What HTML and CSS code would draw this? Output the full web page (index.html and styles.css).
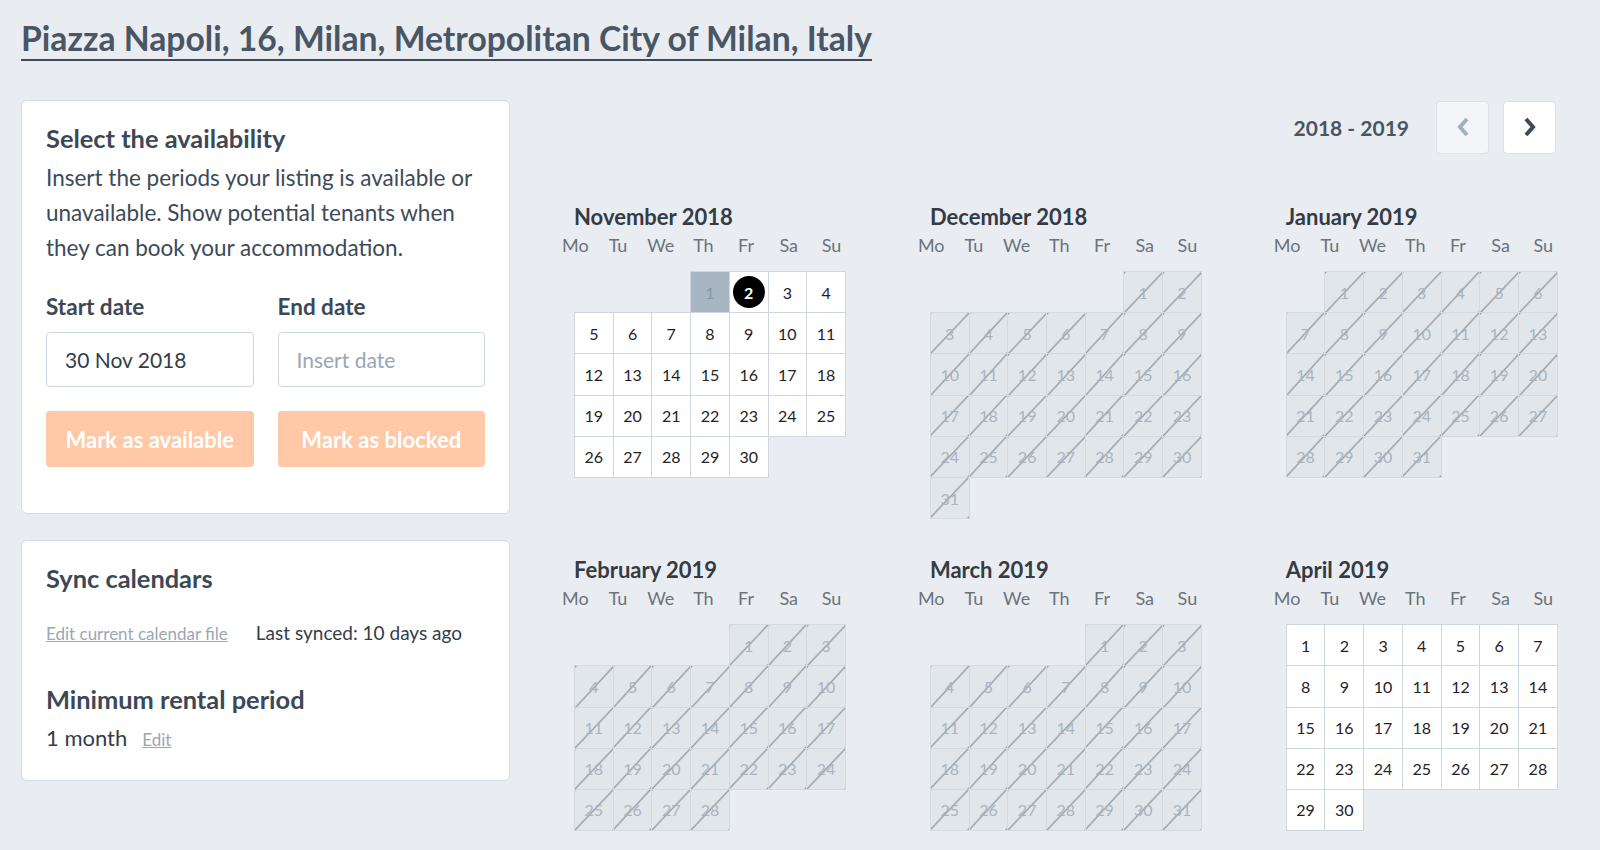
FILE: index.html
```html
<!DOCTYPE html>
<html lang="en">
<head>
<meta charset="utf-8">
<title>Availability</title>
<link rel="stylesheet" href="styles.css">
</head>
<body>
<div class="page">
  <h1 class="address">Piazza Napoli, 16, Milan, Metropolitan City of Milan, Italy</h1>
  <div class="layout">
    <aside class="sidebar">
      <section class="card availability">
        <h2>Select the availability</h2>
        <p class="intro">Insert the periods your listing is available or unavailable. Show potential tenants when they can book your accommodation.</p>
        <div class="date-grid">
          <div class="field">
            <label class="label">Start date</label>
            <div class="input">30 Nov 2018</div>
          </div>
          <div class="field">
            <label class="label">End date</label>
            <div class="input placeholder">Insert date</div>
          </div>
          <button class="btn">Mark as available</button>
          <button class="btn">Mark as blocked</button>
        </div>
      </section>
      <section class="card sync">
        <h2>Sync calendars</h2>
        <div class="sync-row">
          <a class="link">Edit current calendar file</a>
          <span class="synced">Last synced: 10 days ago</span>
        </div>
        <h2 class="min-title">Minimum rental period</h2>
        <div class="min-row">
          <span class="min-value">1 month</span>
          <a class="link small">Edit</a>
        </div>
      </section>
    </aside>

    <main class="calendar-area">
      <div class="cal-nav">
        <span class="years">2018 - 2019</span>
        <button class="nav-btn prev" aria-label="Previous">
          <svg width="14" height="22" viewBox="0 0 14 22"><polyline points="11,3 4,11 11,19" fill="none" stroke="currentColor" stroke-width="4"/></svg>
        </button>
        <button class="nav-btn next" aria-label="Next">
          <svg width="14" height="22" viewBox="0 0 14 22"><polyline points="3,3 10,11 3,19" fill="none" stroke="currentColor" stroke-width="4"/></svg>
        </button>
      </div>

      <div class="months">
        <!-- November 2018 -->
        <div class="month">
          <div class="month-title">November 2018</div>
          <div class="weekdays"><span>Mo</span><span>Tu</span><span>We</span><span>Th</span><span>Fr</span><span>Sa</span><span>Su</span></div>
          <table class="cal">
            <tr><td></td><td></td><td></td><td class="d sel">1</td><td class="d today"><span>2</span></td><td class="d">3</td><td class="d">4</td></tr>
            <tr><td class="d">5</td><td class="d">6</td><td class="d">7</td><td class="d">8</td><td class="d">9</td><td class="d">10</td><td class="d">11</td></tr>
            <tr><td class="d">12</td><td class="d">13</td><td class="d">14</td><td class="d">15</td><td class="d">16</td><td class="d">17</td><td class="d">18</td></tr>
            <tr><td class="d">19</td><td class="d">20</td><td class="d">21</td><td class="d">22</td><td class="d">23</td><td class="d">24</td><td class="d">25</td></tr>
            <tr><td class="d">26</td><td class="d">27</td><td class="d">28</td><td class="d">29</td><td class="d">30</td><td></td><td></td></tr>
          </table>
        </div>

        <!-- December 2018 -->
        <div class="month">
          <div class="month-title">December 2018</div>
          <div class="weekdays"><span>Mo</span><span>Tu</span><span>We</span><span>Th</span><span>Fr</span><span>Sa</span><span>Su</span></div>
          <table class="cal">
            <tr><td></td><td></td><td></td><td></td><td></td><td class="x">1</td><td class="x">2</td></tr>
            <tr><td class="x">3</td><td class="x">4</td><td class="x">5</td><td class="x">6</td><td class="x">7</td><td class="x">8</td><td class="x">9</td></tr>
            <tr><td class="x">10</td><td class="x">11</td><td class="x">12</td><td class="x">13</td><td class="x">14</td><td class="x">15</td><td class="x">16</td></tr>
            <tr><td class="x">17</td><td class="x">18</td><td class="x">19</td><td class="x">20</td><td class="x">21</td><td class="x">22</td><td class="x">23</td></tr>
            <tr><td class="x">24</td><td class="x">25</td><td class="x">26</td><td class="x">27</td><td class="x">28</td><td class="x">29</td><td class="x">30</td></tr>
            <tr><td class="x">31</td><td></td><td></td><td></td><td></td><td></td><td></td></tr>
          </table>
        </div>

        <!-- January 2019 -->
        <div class="month">
          <div class="month-title">January 2019</div>
          <div class="weekdays"><span>Mo</span><span>Tu</span><span>We</span><span>Th</span><span>Fr</span><span>Sa</span><span>Su</span></div>
          <table class="cal">
            <tr><td></td><td class="x">1</td><td class="x">2</td><td class="x">3</td><td class="x">4</td><td class="x">5</td><td class="x">6</td></tr>
            <tr><td class="x">7</td><td class="x">8</td><td class="x">9</td><td class="x">10</td><td class="x">11</td><td class="x">12</td><td class="x">13</td></tr>
            <tr><td class="x">14</td><td class="x">15</td><td class="x">16</td><td class="x">17</td><td class="x">18</td><td class="x">19</td><td class="x">20</td></tr>
            <tr><td class="x">21</td><td class="x">22</td><td class="x">23</td><td class="x">24</td><td class="x">25</td><td class="x">26</td><td class="x">27</td></tr>
            <tr><td class="x">28</td><td class="x">29</td><td class="x">30</td><td class="x">31</td><td></td><td></td><td></td></tr>
          </table>
        </div>

        <!-- February 2019 -->
        <div class="month">
          <div class="month-title">February 2019</div>
          <div class="weekdays"><span>Mo</span><span>Tu</span><span>We</span><span>Th</span><span>Fr</span><span>Sa</span><span>Su</span></div>
          <table class="cal">
            <tr><td></td><td></td><td></td><td></td><td class="x">1</td><td class="x">2</td><td class="x">3</td></tr>
            <tr><td class="x">4</td><td class="x">5</td><td class="x">6</td><td class="x">7</td><td class="x">8</td><td class="x">9</td><td class="x">10</td></tr>
            <tr><td class="x">11</td><td class="x">12</td><td class="x">13</td><td class="x">14</td><td class="x">15</td><td class="x">16</td><td class="x">17</td></tr>
            <tr><td class="x">18</td><td class="x">19</td><td class="x">20</td><td class="x">21</td><td class="x">22</td><td class="x">23</td><td class="x">24</td></tr>
            <tr><td class="x">25</td><td class="x">26</td><td class="x">27</td><td class="x">28</td><td></td><td></td><td></td></tr>
          </table>
        </div>

        <!-- March 2019 -->
        <div class="month">
          <div class="month-title">March 2019</div>
          <div class="weekdays"><span>Mo</span><span>Tu</span><span>We</span><span>Th</span><span>Fr</span><span>Sa</span><span>Su</span></div>
          <table class="cal">
            <tr><td></td><td></td><td></td><td></td><td class="x">1</td><td class="x">2</td><td class="x">3</td></tr>
            <tr><td class="x">4</td><td class="x">5</td><td class="x">6</td><td class="x">7</td><td class="x">8</td><td class="x">9</td><td class="x">10</td></tr>
            <tr><td class="x">11</td><td class="x">12</td><td class="x">13</td><td class="x">14</td><td class="x">15</td><td class="x">16</td><td class="x">17</td></tr>
            <tr><td class="x">18</td><td class="x">19</td><td class="x">20</td><td class="x">21</td><td class="x">22</td><td class="x">23</td><td class="x">24</td></tr>
            <tr><td class="x">25</td><td class="x">26</td><td class="x">27</td><td class="x">28</td><td class="x">29</td><td class="x">30</td><td class="x">31</td></tr>
          </table>
        </div>

        <!-- April 2019 -->
        <div class="month">
          <div class="month-title">April 2019</div>
          <div class="weekdays"><span>Mo</span><span>Tu</span><span>We</span><span>Th</span><span>Fr</span><span>Sa</span><span>Su</span></div>
          <table class="cal">
            <tr><td class="d">1</td><td class="d">2</td><td class="d">3</td><td class="d">4</td><td class="d">5</td><td class="d">6</td><td class="d">7</td></tr>
            <tr><td class="d">8</td><td class="d">9</td><td class="d">10</td><td class="d">11</td><td class="d">12</td><td class="d">13</td><td class="d">14</td></tr>
            <tr><td class="d">15</td><td class="d">16</td><td class="d">17</td><td class="d">18</td><td class="d">19</td><td class="d">20</td><td class="d">21</td></tr>
            <tr><td class="d">22</td><td class="d">23</td><td class="d">24</td><td class="d">25</td><td class="d">26</td><td class="d">27</td><td class="d">28</td></tr>
            <tr><td class="d">29</td><td class="d">30</td><td></td><td></td><td></td><td></td><td></td></tr>
          </table>
        </div>
      </div>
    </main>
  </div>
</div>
</body>
</html>
```
FILE: styles.css
```css
* { box-sizing: border-box; }

html, body {
  margin: 0;
  padding: 0;
  background: #e9edf1;
}

body {
  font-family: "Lato", "Liberation Sans", sans-serif;
  color: #3c4856;
}

.page {
  padding: 0 0 0 21px;
}

.address {
  width: fit-content;
  margin: 20px 0 0;
  padding-bottom: 3px;
  border-bottom: 2px solid #3e4a59;
  font-size: 33.7px;
  line-height: 36px;
  font-weight: 700;
  color: #4a5666;
}

.layout {
  display: flex;
  align-items: flex-start;
  gap: 43px;
  margin-top: 39px;
}

/* ---------- sidebar ---------- */
.sidebar {
  width: 489px;
  flex: none;
  display: flex;
  flex-direction: column;
  gap: 26px;
}

.card {
  background: #fff;
  border: 1px solid #d5dce3;
  border-radius: 6px;
  padding: 22px 24px 46px 24px;
}

.card h2 {
  margin: 0;
  font-size: 25.4px;
  line-height: 30px;
  font-weight: 700;
  color: #3c4856;
}

.intro {
  margin: 7px 0 0;
  font-size: 22.5px;
  line-height: 35px;
  color: #3c4a58;
}

.date-grid {
  display: grid;
  grid-template-columns: 1fr 1fr;
  column-gap: 24px;
  row-gap: 24px;
  margin-top: 28px;
}

.label {
  display: block;
  font-size: 22.5px;
  line-height: 28px;
  font-weight: 700;
  color: #3c4856;
  margin-bottom: 11px;
}

.input {
  height: 55px;
  border: 1px solid #cdd4db;
  border-radius: 4px;
  padding: 0 18px;
  display: flex;
  align-items: center;
  font-size: 21px;
  color: #333d49;
}

.input.placeholder {
  color: #9aa6b2;
}

.btn {
  height: 56px;
  border: none;
  border-radius: 4px;
  background: #ffc9a8;
  color: #fff;
  font-family: inherit;
  font-size: 22px;
  font-weight: 700;
  padding: 0;
}

.card.sync {
  padding-bottom: 27px;
}

.sync-row {
  display: flex;
  align-items: baseline;
  gap: 28px;
  margin-top: 28px;
  line-height: 24px;
}

.link {
  color: #9ba7b3;
  text-decoration: underline;
  font-size: 17px;
}

.synced {
  font-size: 19px;
  color: #333d48;
}

.card h2.min-title {
  margin-top: 38px;
}

.min-row {
  display: flex;
  align-items: baseline;
  gap: 15px;
  margin-top: 11px;
  line-height: 26px;
}

.min-value {
  font-size: 22px;
  color: #333d48;
}

.link.small {
  font-size: 17px;
}

/* ---------- calendars ---------- */
.calendar-area {
  width: 1009px;
  flex: none;
}

.cal-nav {
  display: flex;
  justify-content: flex-end;
  align-items: center;
  height: 54px;
  padding-right: 6px;
}

.years {
  font-size: 21px;
  font-weight: 700;
  color: #4a5563;
  margin-right: 27px;
}

.nav-btn {
  width: 53px;
  height: 53px;
  border: 1px solid #dde2e7;
  border-radius: 4px;
  background: #fff;
  display: flex;
  align-items: center;
  justify-content: center;
  padding: 0;
  color: #3d4a58;
}

.nav-btn.prev {
  background: #f3f5f8;
  color: #a5afb9;
  margin-right: 14px;
}

.months {
  display: grid;
  grid-template-columns: repeat(3, 297.5px);
  column-gap: 58.4px;
  row-gap: 38px;
  margin-top: 50px;
  align-items: start;
}

.month-title {
  padding-left: 21px;
  font-size: 22px;
  line-height: 26px;
  font-weight: 700;
  color: #343b44;
  margin-bottom: 4px;
}

.weekdays {
  display: grid;
  grid-template-columns: repeat(7, 42.7px);
  margin-left: 1px;
  font-size: 18px;
  line-height: 22px;
  color: #6b737d;
  text-align: center;
  margin-bottom: 15px;
}

.cal {
  table-layout: fixed;
  border-collapse: collapse;
  width: 272px;
  margin-left: 21px;
}

.cal td {
  height: 41.2px;
  padding: 0;
  text-align: center;
  font-size: 16px;
  color: #1f2328;
}

.cal td.d {
  border: 1px solid #cfd6dd;
  background: #fff;
}

.cal td.x {
  border: 1px solid #d3d9df;
  background-color: #e1e6eb;
  background-image: linear-gradient(to bottom right, transparent calc(50% - 0.7px), #4f555b 50%, transparent calc(50% + 0.7px));
  color: #a9b4bf;
}

.cal td.sel {
  background: #a8b6c3;
  color: #8796a5;
}

.cal td.today span {
  display: inline-flex;
  width: 32px;
  height: 32px;
  border-radius: 50%;
  background: #000;
  color: #fff;
  font-weight: 700;
  align-items: center;
  justify-content: center;
}
```
